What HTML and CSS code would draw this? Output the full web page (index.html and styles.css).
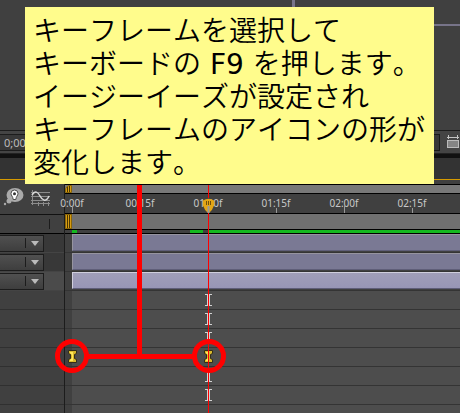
FILE: index.html
```
<!DOCTYPE html>
<html lang="ja">
<head>
    <meta charset="UTF-8">
    <title>キーフレーム</title>
    <link rel="stylesheet" href="styles.css">
</head>
<body>
<div class="app">
    <div class="viewer">
        <span class="guide-v"></span>
        <span class="guide-h"></span>
    </div>
    <div class="viewer-bar">
        <span class="timecode">0;00</span>
        <span class="viewer-right">
            <span class="field"></span>
            <svg class="icon-view" width="12" height="16" viewBox="0 0 12 16">
                <path d="M0 3.500h12M1.500 1v4M10.500 1v4" stroke="#c4c4c4" fill="none"/>
                <rect x="0.500" y="6.500" width="11" height="7" fill="#858585" stroke="#bbb"/>
            </svg>
        </span>
    </div>
    <div class="tabs"></div>
    <div class="timeline">
        <div class="side">
            <div class="tools">
                <svg width="64" height="30" viewBox="0 1 64 30">
                    <ellipse cx="15" cy="12" rx="8.500" ry="7" fill="#aaa"/>
                    <circle cx="9" cy="18" r="2.500" fill="#aaa"/>
                    <circle cx="5" cy="21" r="1.200" fill="#aaa"/>
                    <path d="M14.500 7a3.500 3.500 0 0 1 3.500 3.500c0 2-2 3-2.200 6h-2.600c-.2-3-2.200-4-2.200-6a3.500 3.500 0 0 1 3.500-3.500z" fill="#fff" stroke="#4a4a4a"/>
                    <circle cx="14.500" cy="10.800" r="1.500" fill="#333"/>
                    <path d="M31 9.500h19M31 13.500h19M31 17.500h19M32.500 7v15M31 20.500h19M38.500 19v4M43.500 19v4M48.500 19v4" stroke="#8c8c8c" fill="none"/>
                    <path d="M32 12c3-5 6-3 8 1s6 7 9 0" stroke="#d8d8d8" stroke-width="1.500" fill="none"/>
                </svg>
            </div>
            <div class="side-head"></div>
            <div class="side-row"><button class="drop" aria-label="モード"></button></div>
            <div class="side-row"><button class="drop" aria-label="モード"></button></div>
            <div class="side-row selected"><button class="drop" aria-label="モード"></button></div>
            <div class="side-row empty"></div>
            <div class="side-row empty"></div>
            <div class="side-row empty"></div>
            <div class="side-row empty"></div>
            <div class="side-row empty"></div>
            <div class="side-row empty"></div>
            <div class="side-row empty"></div>
        </div>
        <div class="tracks">
            <div class="navigator"><span class="handle round"></span></div>
            <div class="ruler">
                <span class="tick">0:00f</span>
                <span class="tick">00:15f</span>
                <span class="tick">01:00f</span>
                <span class="tick">01:15f</span>
                <span class="tick">02:00f</span>
                <span class="tick">02:15f</span>
            </div>
            <div class="work-area"><span class="handle"></span></div>
            <div class="cache"><span class="c1"></span><span class="c2"></span><span class="c3"></span></div>
            <div class="row"><div class="layer"></div></div>
            <div class="row"><div class="layer"></div></div>
            <div class="row"><div class="layer selected"></div></div>
            <div class="row"><div class="lane"></div></div>
            <div class="row"><div class="lane"></div></div>
            <div class="row"><div class="lane"></div></div>
            <div class="row"><div class="lane"></div></div>
            <div class="row"><div class="lane"></div></div>
            <div class="row"><div class="lane"></div></div>
            <div class="row"><div class="lane"></div></div>
        </div>
    </div>

    <!-- playhead, keyframes and callout lines -->
    <svg class="overlay" width="240" height="229" viewBox="0 0 240 229">
        <defs>
            <path id="beam" d="M0 .5h7M0 11.500h7M2.500 1v10M4.500 1v10" stroke="#d2d2d2" fill="none"/>
            <g id="key">
                <path d="M-4.500-5.500h8v3l-2 1v4l2 1v3h-8v-3l2-1v-4l-2-1z" fill="#d9b92c" stroke="#332d18"/>
                <path d="M-3-4h3v9h-3v-1l2-2v-3l-2-2z" fill="#ffe95a"/>
            </g>
        </defs>
        <use href="#beam" x="205" y="109"/>
        <use href="#beam" x="205" y="128"/>
        <use href="#beam" x="205" y="147"/>
        <use href="#beam" x="205" y="185"/>
        <use href="#beam" x="205" y="204"/>
        <path d="M203 15.500q5.500-3.500 11 0v5q-1 4-5.500 8q-4.500-4-5.500-8z" fill="#e2a516"/>
        <path d="M206.500 16v4M208.500 16v4M210.500 16v4" stroke="#70500b"/>
        <use href="#key" x="73" y="171"/>
        <use href="#key" x="209" y="171"/>
        <path d="M208.500 0v13M208.500 28v201" stroke="#f00"/>
        <path d="M208.500 21v7" stroke="#999" stroke-width="2"/>
        <path d="M139.500 0v171M88 171.500h105" stroke="#f00" stroke-width="5" fill="none"/>
        <circle cx="72" cy="171" r="14.500" stroke="#f00" stroke-width="5" fill="none"/>
        <circle cx="209" cy="171" r="14.500" stroke="#f00" stroke-width="5" fill="none"/>
    </svg>

    <p class="note">キーフレームを選択して<br>キーボードの<span class="key-name"> F9 </span>を押します。<br>イージーイーズが設定され<br>キーフレームのアイコンの形が<br>変化します。</p>
</div>
</body>
</html>
```

FILE: styles.css
```
* {
    box-sizing: border-box;
}
body {
    margin: 0;
    background: #404040;
}
.app {
    position: relative;
    height: 100vh;
    overflow: hidden;
}
.viewer {
    position: relative;
    height: 131px;
    background: #404040;
    border-bottom: 1px solid #1c1c1c;
}
.guide-v {
    position: absolute;
    left: 292px;
    top: 0;
    width: 3px;
    height: 24px;
    background: #777489;
}
.guide-h {
    position: absolute;
    left: 292px;
    right: 0;
    top: 24px;
    height: 2px;
    background: #777489;
}
.viewer-bar {
    display: flex;
    justify-content: space-between;
    align-items: center;
    height: 23px;
    background: #444;
    border-bottom: 1px solid #222;
}
.timecode {
    padding-left: 4px;
    width: 60px;
    height: 17px;
    line-height: 15px;
    font-size: 11px;
    font-family: "Noto Sans", sans-serif;
    color: #bbb;
    background: #383838;
    border-top: 1px solid #1c1c1c;
    border-bottom: 1px solid #1c1c1c;
}
.viewer-right {
    display: flex;
    align-items: center;
    gap: 7px;
    padding-right: 1px;
}
.field {
    width: 60px;
    height: 17px;
    border: 1px solid #1a1a1a;
    background: #383838;
}
.tabs {
    height: 26px;
    border-top: 4px solid #111;
    border-bottom: 1px solid #d69a00;
    background: #333;
}
.timeline {
    display: flex;
    padding-top: 4px;
    background: #404040;
}
.side {
    width: 65px;
    border-right: 1px solid #1c1c1c;
    background: #404040;
}
.tools {
    height: 30px;
}
.tools svg {
    display: block;
}
.side-head {
    height: 20px;
    padding-top: 4px;
    border-top: 1px solid #111;
    border-bottom: 1px solid #000;
}
.side-head::before {
    content: "";
    display: block;
    width: 49px;
    height: 10px;
    border-right: 1px solid #1c1c1c;
}
.side-row {
    height: 19px;
    padding-top: 1px;
    background: #383838;
    border-bottom: 1px solid #444;
}
.side-row.selected {
    background: #4b4b4b;
}
.side-row.empty {
    background: #404040;
    border-bottom-color: #303030;
}
.drop {
    position: relative;
    display: block;
    width: 44px;
    height: 17px;
    margin: 0;
    padding: 0;
    border: 1px solid #1c1c1c;
    border-left: 0;
    background: linear-gradient(#505050, #3e3e3e);
}
.drop::before {
    content: "";
    position: absolute;
    left: 25px;
    top: 2px;
    width: 1px;
    height: 10px;
    background: #1c1c1c;
}
.drop::after {
    content: "";
    position: absolute;
    left: 31px;
    top: 5px;
    border: 4px solid transparent;
    border-top: 5px solid #bbb;
    border-bottom: 0;
}
.tracks {
    flex: 1;
    min-width: 0;
}
.navigator {
    height: 9px;
    border-top: 1px solid #000;
    background: #787878;
}
.handle {
    display: block;
    width: 7px;
    height: 100%;
    border: 1px solid #8a6508;
    background: linear-gradient(90deg, #d69c12 1px, #4b3600 1px, #4b3600 2px, #d69c12 2px, #d69c12 3px, #4b3600 3px, #4b3600 4px, #d69c12 4px);
}
.handle.round {
    border-radius: 5px 0 0 0;
}
.ruler {
    display: flex;
    height: 20px;
    padding-top: 1px;
    border-top: 1px solid #000;
    background: #404040;
}
.tick {
    position: relative;
    flex: none;
    width: 68px;
    font-size: 10px;
    line-height: 16px;
    text-align: center;
    font-family: "Noto Sans", sans-serif;
    color: #c8c8c8;
}
.tick:first-child {
    margin-left: -27px;
}
.tick::after {
    content: "";
    position: absolute;
    left: 34px;
    bottom: 0;
    width: 1px;
    height: 5px;
    background: #999;
}
.tick:nth-child(odd)::after {
    height: 7px;
}
.work-area {
    height: 17px;
    border-top: 1px solid #000;
    border-bottom: 1px solid #000;
    background: #707070;
}
.cache {
    display: flex;
    height: 4px;
    padding-left: 7px;
    border-bottom: 1px solid #000;
    background: #404040;
}
.c1 {
    width: 5px;
    margin-right: 113px;
    background: #14b820;
}
.c2 {
    width: 13px;
    margin-right: 5px;
    background: #14b820;
}
.c3 {
    flex: 1;
    background: #14b820;
}
.row {
    height: 19px;
    padding-left: 7px;
    border-bottom: 1px solid #343434;
    background: #404040;
}
.layer {
    height: 17px;
    background: #7a7994;
    border-top: 1px solid #96949f;
    border-left: 1px solid #96949f;
    border-bottom: 1px solid #5f5e78;
}
.layer.selected {
    background: linear-gradient(#a09eb8, #9896b6);
    border-top-color: #d0cfdc;
    border-left-color: #d0cfdc;
}
.lane {
    height: 18px;
    background: #4d4d4d;
}
.overlay {
    position: absolute;
    left: 0;
    top: 185px;
}
.note {
    position: absolute;
    left: 25px;
    top: 7px;
    margin: 0;
    padding: 6px 9px 6px 8px;
    font-size: 28px;
    line-height: 33px;
    white-space: nowrap;
    font-weight: 350;
    font-kerning: none;
    font-family: "Noto Sans CJK JP", sans-serif;
    color: #000;
    background: #fffc8c;
}
.key-name {
    font-weight: 400;
    line-height: 1;
    font-family: "DejaVu Sans", sans-serif;
}
```
